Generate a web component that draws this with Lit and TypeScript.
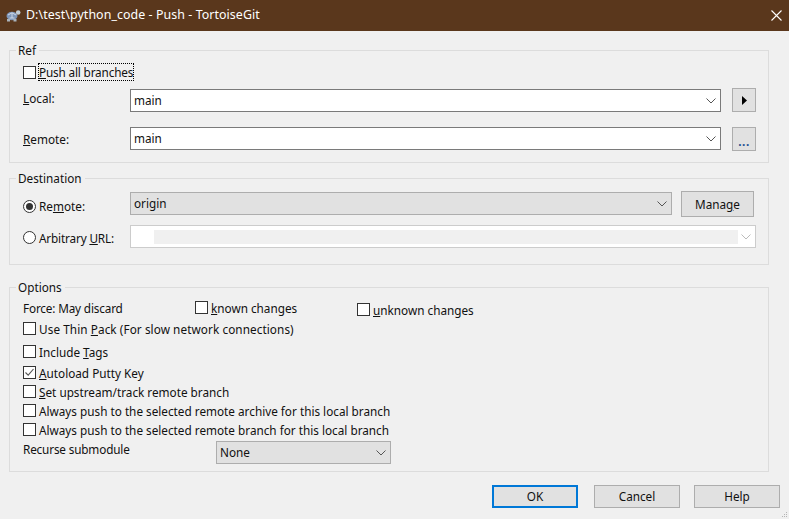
import { LitElement, html, css, svg } from 'lit';
import { customElement } from 'lit/decorators.js';

const chevron = svg`<svg class="chev" width="10" height="6" viewBox="0 0 10 6"><path d="M0.5 0.5 L5 5 L9.5 0.5" fill="none" stroke="currentColor" stroke-width="1"/></svg>`;

@customElement('app-root')
export class AppRoot extends LitElement {
  static styles = css`
    :host {
      display: block;
      width: 789px;
      height: 519px;
      background: #f0f0f0;
      font-family: 'Noto Sans', sans-serif;
      font-size: 11.75px;
      line-height: 16px;
      color: #111;
      overflow: hidden;
      position: relative;
    }
    .titlebar {
      height: 31px;
      background: #5a371c;
      color: #fff;
      display: flex;
      align-items: center;
      padding: 0 7px 1px 5px;
      box-sizing: border-box;
      font-size: 12.4px;
      letter-spacing: 0.07px;
    }
    .titlebar .logo { margin-right: 5px; }
    .titlebar .title { flex: 1; }
    fieldset {
      margin: 0 20px 0 9px;
      padding: 0 13px 0 13px;
      border: 1px solid #dcdcdc;
      min-width: 0;
      box-sizing: border-box;
    }
    legend { padding: 0 3px 0 2px; margin-left: -7px; height: 16px; }
    .ref { margin-top: 11px; height: 121px; }
    .dest { margin-top: 7px; height: 95px; }
    .opts { margin-top: 14px; height: 193px; }

    .row { display: flex; align-items: center; }
    .lbl { width: 107px; flex: none; }
    .up { position: relative; top: -2px; }
    .tight { letter-spacing: -0.16px; }
    .wide { letter-spacing: 0.08px; }
    .ref .r0 { margin-top: 6px; height: 16px; }
    .ref .r1 { margin-top: 8px; height: 24px; align-items: flex-end; }
    .ref .r1 .lbl { align-self: center; }
    .ref .r2 { margin-top: 15px; height: 24px; align-items: flex-start; }
    .ref .r2 .lbl { align-self: center; }
    .dest .r0 { margin-top: 5px; height: 26px; }
    .dest .r0 .combo { margin-bottom: 1px; }
    .dest .r1 { margin-top: 8px; height: 23px; }
    .dest .lbl { position: relative; top: 1px; }
    .dest .r0 .lbl { top: 2px; }
    .opts .o0 { height: 15px; margin-top: 6px; }
    .opts .force { width: 172px; flex: none; position: relative; top: -1px; }
    .opts .known { width: 162px; flex: none; }
    .opts .unknown { position: relative; top: 2px; }
    .list { display: flex; flex-direction: column; }
    .list .row { height: 19px; }
    .list .thin { margin-top: 3px; }
    .list .tags { margin-top: 4px; }
    .list .auto { margin-top: 2px; }
    .list .recurse { height: 23px; margin-top: 2px; }
    .recurse .lbl { width: 193px; top: -4px; }

    .check {
      display: inline-flex;
      align-items: center;
      gap: 3px;
    }
    .box {
      width: 13px;
      height: 13px;
      box-sizing: border-box;
      border: 1px solid #333;
      background: #fff;
      flex: none;
      display: block;
    }
    .radio {
      width: 13px;
      height: 13px;
      box-sizing: border-box;
      border: 1px solid #333;
      border-radius: 50%;
      background: #fff;
      flex: none;
      display: flex;
      align-items: center;
      justify-content: center;
    }
    .radio.on::after {
      content: '';
      width: 7px;
      height: 7px;
      border-radius: 50%;
      background: #333;
    }
    .focus { outline: 1px dotted #000; outline-offset: 0; }

    .combo {
      box-sizing: border-box;
      height: 23px;
      border: 1px solid #7a7a7a;
      background: #fff;
      display: flex;
      align-items: center;
      padding: 0 4px 0 3px;
      justify-content: space-between;
      flex: none;
      color: #555;
    }
    .combo span { color: #111; padding-bottom: 2px; }
    .combo.gray { background: #e1e1e1; border-color: #adadad; }
    .combo.off { border-color: #ccc; color: #bbb; padding: 0 4px 0 23px; gap: 3px; }
    .combo .well { height: 14px; flex: 1; background: #f0f0f0; }
    .w-main { width: 591px; }
    .w-origin { width: 542px; }
    .w-url { width: 626px; }
    .w-none { width: 175px; }

    .btn {
      box-sizing: border-box;
      border: 1px solid #adadad;
      background: #e1e1e1;
      display: flex;
      align-items: center;
      justify-content: center;
      flex: none;
    }
    .mini { width: 24px; height: 24px; margin-left: 11px; }
    .manage { width: 73px; height: 26px; margin-left: 9px; }
    .dots { font-weight: 700; color: #1d4f91; letter-spacing: 0.5px; line-height: 16px; padding-top: 3px; }
    .footer {
      display: flex;
      margin: 13px 0 0 492px;
    }
    .footer .btn { height: 23px; padding-bottom: 2px; }
    .ok { width: 86px; margin-right: 16px; }
    .footer .ok { border: 2px solid #0078d7; }
    .cancel { width: 86px; margin-right: 14px; }
    .help { width: 86px; }
    .grip { position: absolute; right: 1px; bottom: 1px; }
  `;

  private check(label: unknown, checked = false, focus = false) {
    return html`<span class="check">
      <svg class="box" viewBox="0 0 11 11" width="13" height="13">
        ${checked ? svg`<path d="M1.5 5.5 L4.2 8.2 L9.5 2" fill="none" stroke="#555" stroke-width="1.1"/>` : ''}
      </svg>
      <span class=${focus ? 'focus' : ''}>${label}</span>
    </span>`;
  }

  private combo(value: string, cls: string) {
    return html`<div class="combo ${cls}"><span>${value}</span>${chevron}</div>`;
  }

  render() {
    return html`
      <div class="titlebar">
        <svg class="logo" width="16" height="15" viewBox="0 0 16 15">
          <ellipse cx="7" cy="8" rx="5.5" ry="4.2" fill="#7f96b8"/>
          <path d="M3 7 L7 4.8 L11 7 M4.5 10 L9.5 10 M7 5 L7 10" stroke="#d5deeb" stroke-width="0.9" fill="none"/>
          <circle cx="13.2" cy="4.5" r="2.3" fill="#c3ccd3"/>
          <rect x="2" y="11" width="3" height="2.5" fill="#aab3bb"/>
          <rect x="8.5" y="11" width="3" height="2.5" fill="#aab3bb"/>
        </svg>
        <span class="title">D:\\test\\python_code - Push - TortoiseGit</span>
        <svg width="11" height="11" viewBox="0 0 11 11">
          <path d="M0.5 0.5 L10.5 10.5 M10.5 0.5 L0.5 10.5" stroke="#fff" stroke-width="1.1"/>
        </svg>
      </div>

      <fieldset class="ref">
        <legend>Ref</legend>
        <div class="row r0 tight">${this.check(html`<u>P</u>ush all branches`, false, true)}</div>
        <div class="row r1">
          <span class="lbl up"><u>L</u>ocal:</span>
          ${this.combo('main', 'w-main')}
          <div class="btn mini">
            <svg width="5" height="9" viewBox="0 0 5 9"><path d="M0 0 L5 4.5 L0 9 Z" fill="#000"/></svg>
          </div>
        </div>
        <div class="row r2">
          <span class="lbl"><u>R</u>emote:</span>
          ${this.combo('main', 'w-main')}
          <div class="btn mini"><span class="dots">...</span></div>
        </div>
      </fieldset>

      <fieldset class="dest">
        <legend>Destination</legend>
        <div class="row r0">
          <span class="lbl check"><span class="radio on"></span><span>Re<u>m</u>ote:</span></span>
          ${this.combo('origin', 'w-origin gray')}
          <div class="btn manage">Mana<u>g</u>e</div>
        </div>
        <div class="row r1">
          <span class="lbl check tight"><span class="radio"></span><span>Arbitrary <u>U</u>RL:</span></span>
          <div class="combo off w-url"><div class="well"></div>${chevron}</div>
        </div>
      </fieldset>

      <fieldset class="opts">
        <legend>Options</legend>
        <div class="row o0">
          <span class="force tight">Force: May discard</span>
          <span class="known">${this.check(html`<u>k</u>nown changes`)}</span>
          <span class="unknown">${this.check(html`<u>u</u>nknown changes`)}</span>
        </div>
        <div class="list">
          <div class="row thin wide">${this.check(html`Use Thin <u>P</u>ack (For slow network connections)`)}</div>
          <div class="row tags">${this.check(html`Include <u>T</u>ags`)}</div>
          <div class="row auto">${this.check(html`<u>A</u>utoload Putty Key`, true)}</div>
          <div class="row">${this.check(html`<u>S</u>et upstream/track remote branch`)}</div>
          <div class="row">${this.check('Always push to the selected remote archive for this local branch')}</div>
          <div class="row">${this.check('Always push to the selected remote branch for this local branch')}</div>
          <div class="row recurse">
            <span class="lbl up tight">Recurse submodule</span>
            ${this.combo('None', 'w-none gray')}
          </div>
        </div>
      </fieldset>

      <div class="footer">
        <div class="btn ok">OK</div>
        <div class="btn cancel">Cancel</div>
        <div class="btn help">Help</div>
      </div>
      <svg class="grip" width="6" height="6" viewBox="0 0 6 6" fill="#b5b5b5">
        <rect x="4" y="0" width="1" height="1"/><rect x="2" y="2" width="1" height="1"/><rect x="4" y="2" width="1" height="1"/>
        <rect x="0" y="4" width="1" height="1"/><rect x="2" y="4" width="1" height="1"/><rect x="4" y="4" width="1" height="1"/>
      </svg>
    `;
  }
}
